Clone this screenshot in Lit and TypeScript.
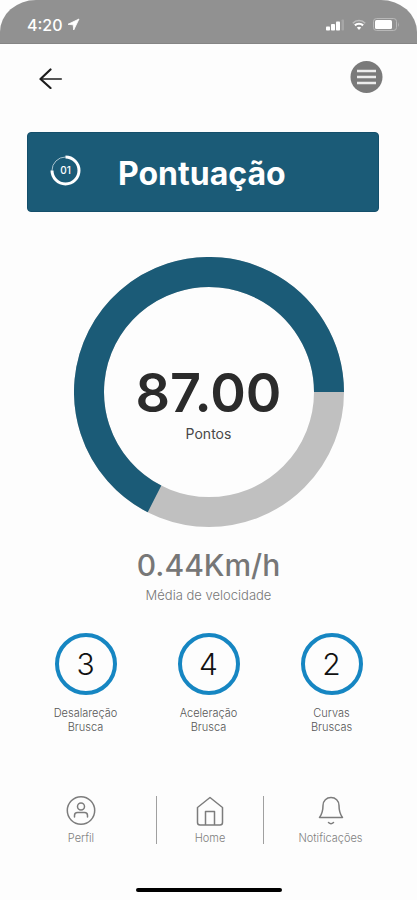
import { LitElement, html, css, svg } from "lit";
import { customElement, property } from "lit/decorators.js";

interface Metric {
  value: number;
  lines: [string, string];
}

const METRICS: Metric[] = [
  { value: 3, lines: ["Desalareção", "Brusca"] },
  { value: 4, lines: ["Aceleração", "Brusca"] },
  { value: 2, lines: ["Curvas", "Bruscas"] },
];

/** Status bar of the phone: clock, location, signal, wifi, battery. */
@customElement("status-bar")
class StatusBar extends LitElement {
  static styles = css`
    :host {
      display: flex;
      align-items: center;
      justify-content: space-between;
      height: 44px;
      box-sizing: border-box;
      padding: 6px 17px 0 27px;
      background: #919191;
      border-bottom: 1px solid #858585;
      border-radius: 36px 36px 0 0 / 32px 32px 0 0;
      color: #fff;
    }
    .left, .right { display: flex; align-items: center; }
    .left { gap: 4px; }
    .right { gap: 7px; }
    .clock { font-size: 16px; line-height: 20px; font-weight: 500; }
    svg { display: block; }
  `;

  render() {
    return html`
      <div class="left">
        <span class="clock">4:20</span>
        <svg width="13" height="13" viewBox="0 0 13 13" aria-hidden="true">
          <path d="M12 1 L1 6.300 L6.200 6.800 L6.700 12 Z" fill="#fff" stroke="#fff" stroke-width=".8" stroke-linejoin="round" />
        </svg>
      </div>
      <div class="right">
        <svg width="19" height="12" viewBox="0 0 19 12" aria-hidden="true">
          <rect x="0" y="7.500" width="4" height="4" rx=".8" fill="#fff" />
          <rect x="5" y="5" width="4" height="6.500" rx=".8" fill="#fff" />
          <rect x="10" y="2.500" width="4" height="9" rx=".8" fill="#fff" />
          <rect x="15.500" y="0.500" width="2.500" height="11" rx=".8" fill="#a6a6a6" />
        </svg>
        <svg width="14" height="12" viewBox="0 0 14 12" aria-hidden="true" fill="none">
          <path d="M.8 4.200 C4.200 .6 9.800 .6 13.200 4.200" stroke="#bdbdbd" stroke-width="1.500" />
          <path d="M2.900 6.400 C5.200 4.200 8.800 4.200 11.100 6.400" stroke="#fff" stroke-width="2.200" />
          <path d="M4.800 8.600 Q7 6.800 9.200 8.600 L7 11 Z" fill="#fff" />
        </svg>
        <svg width="27" height="13" viewBox="0 0 27 13" aria-hidden="true">
          <rect x=".5" y=".5" width="23" height="12" rx="3" fill="none" stroke="#b8b8b8" />
          <rect x="2" y="2" width="17" height="9" rx="1.500" fill="#fff" />
          <path d="M25 4 Q26.600 6.500 25 9 Z" fill="#b8b8b8" />
        </svg>
      </div>
    `;
  }
}

/** Two-part ring with the score in its centre. */
@customElement("score-ring")
class ScoreRing extends LitElement {
  @property({ type: Number }) rest = 117;
  @property() value = "";
  @property() unit = "";

  static styles = css`
    :host { display: grid; width: 270px; height: 270px; }
    svg, .text { grid-area: 1 / 1; }
    svg { display: block; width: 100%; height: 100%; }
    .text {
      display: flex;
      flex-direction: column;
      align-items: center;
      justify-content: center;
      padding-top: 20px;
    }
    .value { font-size: 54px; line-height: 64px; font-weight: 600; color: #2b2b2b; }
    .unit { font-size: 14px; line-height: 18px; font-weight: 400; color: #484848; }
  `;

  render() {
    const arc = 360 - this.rest;
    return html`
      <svg viewBox="0 0 270 270" aria-hidden="true">
        ${svg`
          <circle cx="135" cy="135" r="120" fill="none" stroke="#c0c0c0" stroke-width="30" />
          <circle cx="135" cy="135" r="120" fill="none" stroke="#1b5b77" stroke-width="30"
            pathLength="360" stroke-dasharray="${arc} ${this.rest}"
            transform="rotate(${this.rest} 135 135)" />
        `}
      </svg>
      <div class="text">
        <span class="value">${this.value}</span>
        <span class="unit">${this.unit}</span>
      </div>
    `;
  }
}

@customElement("app-root")
class AppRoot extends LitElement {
  static styles = css`
    :host {
      display: flex;
      flex-direction: column;
      min-height: 100vh;
      box-sizing: border-box;
      background: #fdfdfd;
      font-family: Inter, "Liberation Sans", sans-serif;
      color: #555;
    }
    status-bar { flex: none; }
    button { border: 0; padding: 0; background: none; cursor: pointer; font: inherit; }
    svg { display: block; }
    .toolbar {
      display: flex;
      align-items: center;
      justify-content: space-between;
      height: 66px;
      padding: 0 34px 0 38px;
    }
    .banner {
      display: flex;
      align-items: center;
      height: 80px;
      box-sizing: border-box;
      margin: 22px 38px 0 27px;
      padding: 0 24px 0 22px;
      gap: 37px;
      border-radius: 4px;
      border: 1px solid #144f6b;
      background: #1b5b77;
      color: #fff;
    }
    .banner h1 { margin: 4px 0 0; font-size: 32px; line-height: 40px; font-weight: 700; }
    .badge { flex: none; margin-bottom: 4px; }
    main { display: flex; flex-direction: column; align-items: stretch; }
    score-ring { align-self: center; margin-top: 45px; }
    .speed {
      margin: 20px 0 0;
      text-align: center;
      font-size: 30px;
      line-height: 36px;
      font-weight: 500;
      color: #777;
    }
    .caption {
      margin: 2px 0 0;
      text-align: center;
      font-size: 13px;
      line-height: 20px;
      font-weight: 300;
      color: #777;
    }
    .metrics {
      display: grid;
      grid-template-columns: repeat(3, 1fr);
      list-style: none;
      margin: 28px 0 0;
      padding: 0 24px;
    }
    .metrics li { display: flex; flex-direction: column; align-items: center; gap: 11px; }
    .circle {
      display: flex;
      align-items: center;
      justify-content: center;
      width: 62px;
      height: 62px;
      box-sizing: border-box;
      border: 4px solid #1686c2;
      border-radius: 50%;
      font-size: 30px;
      line-height: 36px;
      font-weight: 300;
      color: #111;
    }
    .label { text-align: center; font-size: 11px; line-height: 14px; font-weight: 300; color: #555; }
    nav {
      display: grid;
      grid-template-columns: 150fr 107fr 134fr;
      margin-top: 62px;
      padding: 0 20px 0 6px;
    }
    nav a {
      display: flex;
      flex-direction: column;
      align-items: center;
      justify-content: space-between;
      height: 48px;
      text-decoration: none;
      font-size: 11px;
      line-height: 12px;
      font-weight: 300;
      color: #808080;
    }
    nav a + a { border-left: 1px solid #a0a0a0; }
    .indicator {
      width: 146px;
      height: 4px;
      border-radius: 2px;
      margin: 44px auto 8px;
      background: #000;
    }
  `;

  render() {
    return html`
      <status-bar></status-bar>
      <header class="toolbar">
        <button aria-label="Voltar">
          <svg width="25" height="24" viewBox="0 0 25 24" fill="none" stroke-width="2.200" stroke-linecap="round" stroke-linejoin="round">
            <path d="M3 14 H23" stroke="#555" />
            <path d="M12.500 4.500 L2.500 14 L12.500 23" stroke="#1c1c1c" />
          </svg>
        </button>
        <button aria-label="Menu">
          <svg width="33" height="33" viewBox="0 0 33 33">
            <circle cx="16.500" cy="16" r="16" fill="#7a7a7a" />
            <path d="M7 10 H26 M7 16 H26 M7 22 H26" stroke="#ececec" stroke-width="2.400" />
          </svg>
        </button>
      </header>
      <main>
        <div class="banner">
          <svg class="badge" width="31" height="31" viewBox="0 0 31 31" aria-hidden="true">
            <circle cx="15.500" cy="15.500" r="13.500" fill="none" stroke="#a9c3cf" stroke-width="1" />
            <path d="M15.500 2 A13.500 13.500 0 1 1 2 15.500" fill="none" stroke="#fff" stroke-width="3" />
            <text x="15.500" y="19" text-anchor="middle" font-size="10" font-weight="500" fill="#fff">01</text>
          </svg>
          <h1>Pontuação</h1>
        </div>
        <score-ring value="87.00" unit="Pontos" rest="117"></score-ring>
        <p class="speed">0.44Km/h</p>
        <p class="caption">Média de velocidade</p>
        <ul class="metrics">
          ${METRICS.map(
            (m) => html`<li>
              <span class="circle">${m.value}</span>
              <span class="label">${m.lines[0]}<br />${m.lines[1]}</span>
            </li>`
          )}
        </ul>
      </main>
      <nav>
        <a href="#perfil">
          <svg width="30" height="30" viewBox="0 0 30 30" fill="none" stroke="#7c7c7c" stroke-width="1.500" stroke-linecap="round">
            <circle cx="15" cy="14.500" r="13.700" />
            <circle cx="15" cy="10.500" r="3.500" />
            <path d="M8.500 21 V19.500 Q8.500 16.500 11.500 16.500 H18.500 Q21.500 16.500 21.500 19.500 V21" />
          </svg>
          Perfil
        </a>
        <a href="#home">
          <svg width="28" height="30" viewBox="0 0 28 30" fill="none" stroke="#7c7c7c" stroke-width="1.500" stroke-linejoin="round">
            <path d="M1.500 11.500 L14 1.500 L26.500 11.500 V26.500 Q26.500 29 24 29 H4 Q1.500 29 1.500 26.500 Z" />
            <path d="M9.500 29 V15.500 H18.500 V29" />
          </svg>
          Home
        </a>
        <a href="#notificacoes">
          <svg width="26" height="30" viewBox="0 0 26 30" fill="none" stroke="#7c7c7c" stroke-width="1.500" stroke-linecap="round" stroke-linejoin="round">
            <path d="M1.500 21.500 C4.500 17.500 5 14.500 5 9.500 C5 4.800 8.500 1.500 13 1.500 C17.500 1.500 21 4.800 21 9.500 C21 14.500 21.500 17.500 24.500 21.500 Z" />
            <path d="M10.500 26.500 Q13 29 15.500 26.500" />
          </svg>
          Notificações
        </a>
      </nav>
      <div class="indicator"></div>
    `;
  }
}
